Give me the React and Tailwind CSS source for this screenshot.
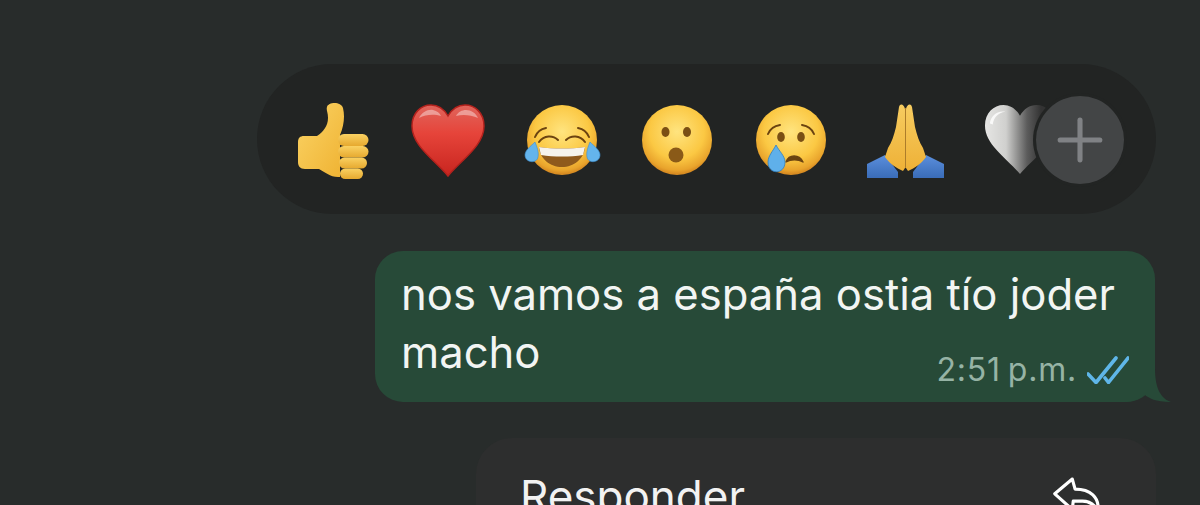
import React from 'react';
import { Plus } from 'lucide-react';

const ThumbsUp = () => (
    <svg width="72" height="77" viewBox="0 0 72 77">
        <defs>
            <linearGradient id="thumbFill" x1="0" y1="0" x2="1" y2="1">
                <stop offset="0" stopColor="#fbd466" />
                <stop offset="1" stopColor="#efb232" />
            </linearGradient>
            <linearGradient id="fingerFill" x1="0" y1="0" x2="0" y2="1">
                <stop offset="0" stopColor="#fad162" />
                <stop offset="1" stopColor="#e6a92f" />
            </linearGradient>
        </defs>
        <path d="M1 40C1 36 3 34 7 34H20C26 30 31 24 31 16 31 10 29 8 30 5 31 0 44-1 46 6 48 14 47 24 43 33V75C34 76 28 70 22 67H8C3 67 1 64 1 60z" fill="url(#thumbFill)" />
        <rect x="41" y="32" width="30.500" height="12" rx="6" fill="url(#fingerFill)" />
        <rect x="41" y="44" width="30.500" height="11.500" rx="5.700" fill="url(#fingerFill)" />
        <rect x="42" y="55.500" width="28" height="11" rx="5.500" fill="url(#fingerFill)" />
        <rect x="43" y="66.500" width="23" height="10.500" rx="5.200" fill="url(#fingerFill)" />
    </svg>
);

const RedHeart = () => (
    <svg width="74" height="74" viewBox="0 0 74 74" className="mt-[2px]">
        <defs>
            <linearGradient id="heartFill" x1="0" y1="0" x2="0" y2="1">
                <stop offset="0" stopColor="#e0655c" />
                <stop offset="0.4" stopColor="#e6443a" />
                <stop offset="1" stopColor="#c8251f" />
            </linearGradient>
        </defs>
        <path d="M37 72C24 56 1 42 1 22 1 9 10 1 20 1c7 0 13 4 17 11C41 5 47 1 54 1c10 0 19 8 19 21 0 20-23 34-36 50z" fill="url(#heartFill)" stroke="#b3221d" strokeWidth="1.500" />
        <path d="M8 14c3-6 9-9 14-8 4 1 7 3 8 6-6-2-15-2-22 2zM45 12c2-4 6-6 10-6 5 0 10 3 12 8-7-3-15-4-22-2z" fill="#fff" opacity="0.4" />
    </svg>
);

const FaceBase = ({ id, children }) => (
    <svg width="72" height="72" viewBox="0 0 72 72" className="overflow-visible">
        <defs>
            <radialGradient id={id} cx="0.5" cy="0.38" r="0.6">
                <stop offset="0" stopColor="#ffe47f" />
                <stop offset="0.65" stopColor="#fbc843" />
                <stop offset="0.92" stopColor="#e9a42c" />
                <stop offset="1" stopColor="#d88c22" />
            </radialGradient>
        </defs>
        <circle cx="36" cy="36" r="35" fill={`url(#${id})`} />
        {children}
    </svg>
);

const LaughFace = () => (
    <FaceBase id="laughFill">
        <path d="M9 33c2-5 6-8 11-9M63 33c-2-5-6-8-11-9" fill="none" stroke="#6b4310" strokeWidth="2" strokeLinecap="round" />
        <path d="M13 38c5-7 14-7 19-2M59 38c-5-7-14-7-19-2" fill="none" stroke="#6b4310" strokeWidth="2" strokeLinecap="round" />
        <path d="M13 43c15 2 31 2 46 0-1 12-11 20-23 20S14 55 13 43z" fill="#8f5a1c" />
        <path d="M13 43c15 2 31 2 46 0l-2 8c-13 2-29 2-42 0z" fill="#f6f3ec" />
        <path d="M-1 51c0-5 6-9 10-13 2 5 4 10 3 15-1 7-13 6-13-2z" fill="#64b4ec" stroke="#3d8fd0" strokeWidth="0.6" />
        <path d="M74 51c0-5-6-9-10-13-2 5-4 10-3 15 1 7 13 6 13-2z" fill="#64b4ec" stroke="#3d8fd0" strokeWidth="0.6" />
    </FaceBase>
);

const WowFace = () => (
    <FaceBase id="wowFill">
        <ellipse cx="24.500" cy="28" rx="4" ry="5" fill="#7a4f14" />
        <ellipse cx="46" cy="28" rx="4" ry="5" fill="#7a4f14" />
        <ellipse cx="35" cy="51" rx="7.500" ry="7.500" fill="#8a5a18" />
    </FaceBase>
);

const SadFace = () => (
    <FaceBase id="sadFill">
        <path d="M13 30c2-5 6-8 12-9M59 30c-2-5-6-8-12-9" fill="none" stroke="#6b4310" strokeWidth="2" strokeLinecap="round" />
        <ellipse cx="26" cy="33" rx="3.800" ry="5" fill="#7a4f14" />
        <ellipse cx="46" cy="33" rx="3.800" ry="5" fill="#7a4f14" />
        <path d="M31 58c3-8 13-8 17 0-5-3-12-3-17 0z" fill="#6b4310" stroke="#6b4310" strokeWidth="1.400" strokeLinejoin="round" />
        <path d="M13 58c0-6 5-11 8-17 3 6 9 11 9 17 0 13-17 13-17 0z" fill="#5fb0ea" stroke="#2f7fc0" strokeWidth="0.8" />
    </FaceBase>
);

const PrayingHands = () => {
    const hand = "M39 7C38 2 34 1 33 5 32 12 31 18 30 25 28 33 26 40 22 46 21 49 20 52 19 55 24 62 30 66 37 69L39 66z";
    const sleeve = "M1 76V62L19 53 32 70V76z";
    return (
        <svg width="79" height="76" viewBox="0 0 79 76">
            <defs>
                <linearGradient id="handFill" x1="0" y1="0" x2="0" y2="1">
                    <stop offset="0" stopColor="#f7cc60" />
                    <stop offset="1" stopColor="#eeb137" />
                </linearGradient>
                <linearGradient id="sleeveFill" x1="0" y1="0" x2="0" y2="1">
                    <stop offset="0" stopColor="#5b8fdc" />
                    <stop offset="1" stopColor="#3a6cb8" />
                </linearGradient>
            </defs>
            <path d={sleeve} fill="url(#sleeveFill)" />
            <path d={hand} fill="url(#handFill)" />
            <g transform="matrix(-1 0 0 1 79 0)">
                <path d={sleeve} fill="url(#sleeveFill)" />
                <path d={hand} fill="url(#handFill)" />
            </g>
            <path d="M39.500 6v60" stroke="#d0942c" strokeWidth="0.8" />
        </svg>
    );
};

const WhiteHeart = () => (
    <svg width="74" height="72" viewBox="0 0 74 74">
        <defs>
            <linearGradient id="whiteHeartFill" x1="0" y1="0" x2="1" y2="0">
                <stop offset="0" stopColor="#e6e6e4" />
                <stop offset="0.3" stopColor="#d0d0ce" />
                <stop offset="0.6" stopColor="#5c5c5c" />
                <stop offset="0.8" stopColor="#333" />
            </linearGradient>
        </defs>
        <path d="M37 72C24 56 1 42 1 22 1 9 10 1 20 1c7 0 13 4 17 11C41 5 47 1 54 1c10 0 19 8 19 21 0 20-23 34-36 50z" fill="url(#whiteHeartFill)" />
        <path d="M6 20c1-8 8-14 16-12-8 1-12 6-13 13z" fill="#fff" opacity="0.8" />
    </svg>
);

const reactions = [ThumbsUp, RedHeart, LaughFace, WowFace, SadFace, PrayingHands, WhiteHeart];

const ReplyIcon = () => (
    <svg width="48" height="41" viewBox="0 0 52 44" fill="none" stroke="#fff" strokeWidth="3.400" strokeLinejoin="round" strokeLinecap="round">
        <path d="M22 2 3 18l19 17 1-9H33C40 26 46 30 50 36 51 22 42 13 25 13z" />
    </svg>
);

export default function App() {
    const font = { fontFamily: 'Inter, "Liberation Sans", sans-serif' };

    return (
        <div className="w-[1200px] h-[505px] overflow-hidden bg-[#282c2b] flex flex-col items-end pt-16 pr-[44px] gap-[37px]" style={font}>
            {/* reaction bar */}
            <div className="relative w-[899px] h-[150px] shrink-0 rounded-[75px] bg-[#222423] flex items-center pl-[19px] pt-[2px] overflow-hidden">
                {reactions.map((Emoji, i) => (
                    <div key={i} className="w-[114.5px] shrink-0 flex justify-center">
                        <Emoji />
                    </div>
                ))}
                <div className="absolute left-[776px] top-[29px] w-[94px] h-[94px] rounded-full bg-[#222423] flex items-center justify-center">
                    <div className="w-[88px] h-[88px] rounded-full bg-[#434546] flex items-center justify-center">
                        <Plus size={68} strokeWidth={1.8} color="#808285" />
                    </div>
                </div>
            </div>

            {/* message bubble */}
            <div className="relative w-[780px] h-[151px] shrink-0 mr-px -mb-px rounded-[28px] bg-[#274a38] pl-[26px] pr-4 pt-[15px]">
                <p className="text-[43.6px] leading-[58px] text-[#f2f5f3] whitespace-nowrap">nos vamos a españa ostia tío joder<br />macho</p>
                <div className="absolute right-[26px] bottom-[14px] flex items-center gap-[10px]">
                    <span className="text-[32px] leading-9 text-[#96b3a5] tracking-[0.8px] [word-spacing:-3px]">2:51 p.m.</span>
                    <svg width="42" height="28" viewBox="0 0 42 28" fill="none" stroke="#5fb6e8" strokeWidth="3.600" strokeLinecap="round" strokeLinejoin="round">
                        <path d="M1 18l8 8.500L29 2" />
                        <path d="M18 22l3.500 4.500L41 2" />
                    </svg>
                </div>
                <svg className="absolute left-[750px] top-[118px]" width="48" height="34" viewBox="0 0 48 34">
                    <path d="M0 33C8 33 14 30 20 26c4 3 10 7 26 7-9-3-16-12-16-33H0z" fill="#274a38" />
                </svg>
            </div>

            {/* context menu, cut off by the window */}
            <div className="w-[680px] h-[200px] shrink-0 rounded-t-[36px] bg-[#2d2e2e] flex items-start justify-between pl-11 pr-14 pt-[33px]">
                <span className="text-[44px] leading-[50px] text-[#f2f2f2]">Responder</span>
                <div className="mt-[6px]">
                    <ReplyIcon />
                </div>
            </div>
        </div>
    );
}
